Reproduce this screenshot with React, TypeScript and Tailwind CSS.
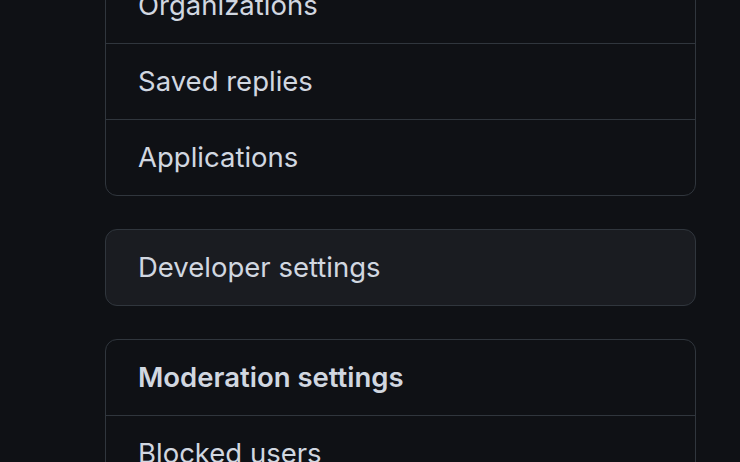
import React from "react";

const topItems = ["Organizations", "Saved replies", "Applications"];

function App() {
  return (
    <div
      className="h-[462px] w-[740px] overflow-hidden bg-[#0f1115] text-[#d1d7e0]"
      style={{ fontFamily: "Inter, 'Noto Sans', sans-serif" }}
    >
      <div className="ml-[105px] mr-[44px] -mt-[33px] flex flex-col gap-[33px]">
        {/* Account group */}
        <nav className="overflow-hidden rounded-[12px] border border-[#30363d]">
          {topItems.map((label, i) => (
            <div
              key={label}
              className={`flex items-center pl-[32px] text-[27.5px] ${
                i > 0 ? "h-[76px] border-t border-[#30363d]" : "h-[75px]"
              }`}
            >
              {label}
            </div>
          ))}
        </nav>

        {/* Developer settings */}
        <div className="flex h-[77px] items-center rounded-[12px] border border-[#30363d] bg-[#1a1c21] pl-[32px] text-[27.5px]">
          Developer settings
        </div>

        {/* Moderation */}
        <nav className="overflow-hidden rounded-[12px] border border-[#30363d]">
          <div className="flex h-[75px] items-center pl-[32px] text-[27.5px] font-semibold">
            Moderation settings
          </div>
          <div className="flex h-[76px] items-center border-t border-[#30363d] pl-[32px] text-[27.5px]">
            Blocked users
          </div>
          <div className="flex h-[76px] items-center border-t border-[#30363d] pl-[32px] text-[27.5px]">
            Interaction limits
          </div>
        </nav>
      </div>
    </div>
  );
}

export default App;
